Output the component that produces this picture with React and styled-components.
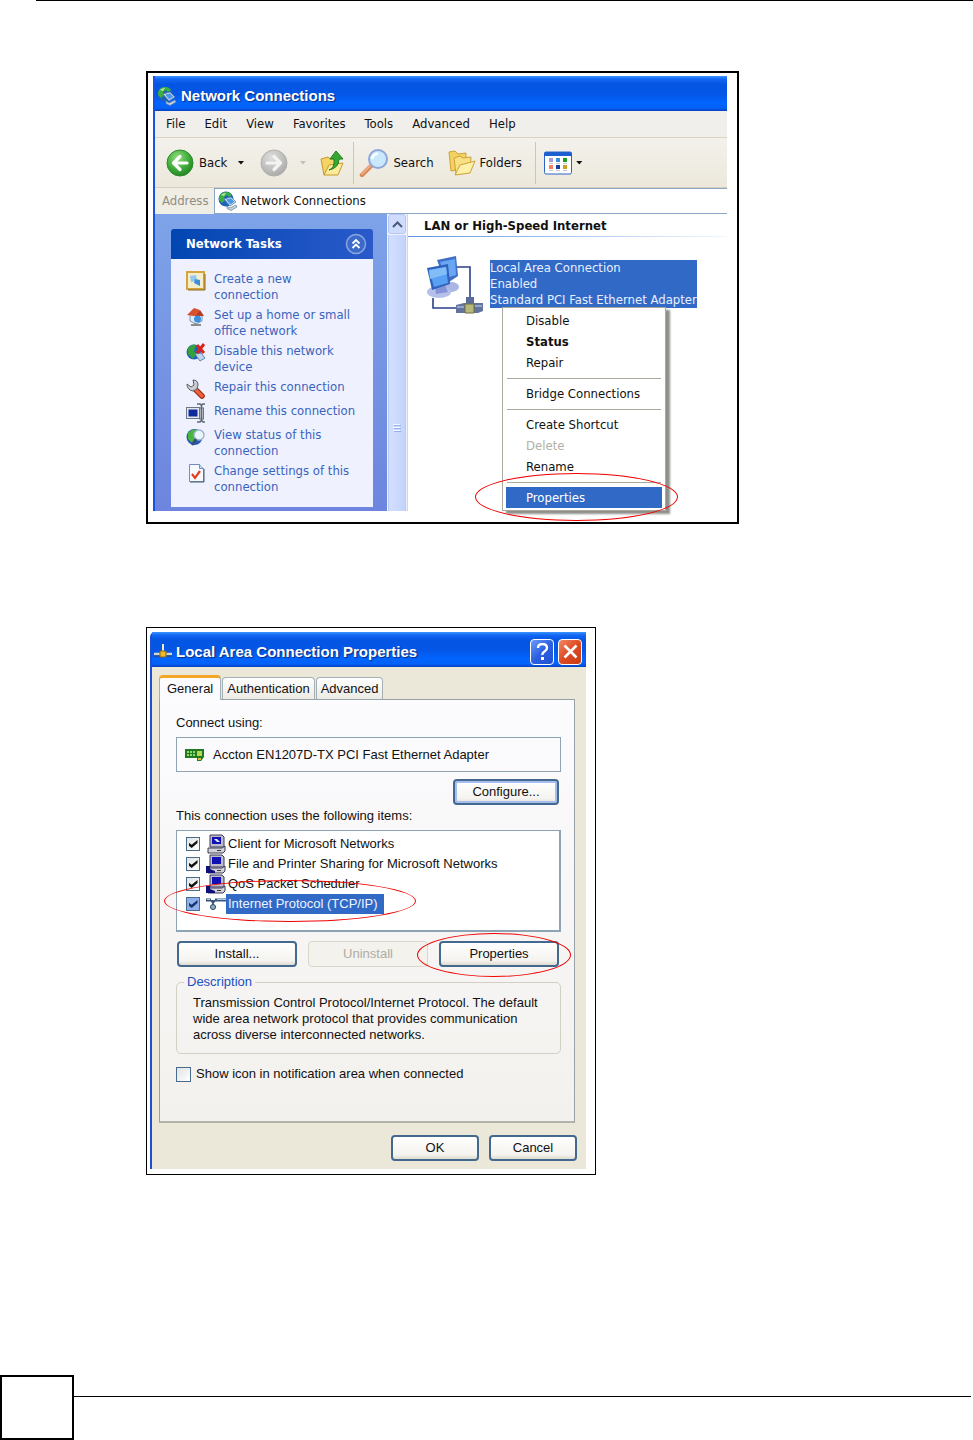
import React, { useState } from "react";
import styled, { createGlobalStyle } from "styled-components";

const GlobalStyle = createGlobalStyle`
  * { box-sizing: border-box; }
  body { margin: 0; background: #fff; }
  button, input { font: inherit; color: inherit; }
  button { margin: 0; padding: 0; border: 0; background: none; white-space: nowrap; }
`;

const tahoma = `"DejaVu Sans Condensed", "Noto Sans", sans-serif`;
const msSans = `"Liberation Sans", Arial, sans-serif`;

/* ---------- page ---------- */

const Page = styled.div`
  display: flex;
  flex-direction: column;
  min-height: 100vh;
  color: #111;
`;

const TopRule = styled.div`
  height: 1px;
  margin-left: 36px;
  background: #000;
`;

const Figures = styled.main`
  display: flex;
  flex-direction: column;
  gap: 103px;
  padding: 70px 20px 40px 146px;
`;

const Figure = styled.figure`
  width: 100%;
  max-width: ${(props) => props.$max}px;
  margin: 0;
  padding: ${(props) => props.$pad};
  border: ${(props) => props.$line}px solid #000;
`;

const Footer = styled.footer`
  display: flex;
  margin-top: auto;
  padding-right: 2px;
`;

const PageNumber = styled.div`
  width: 74px;
  height: 65px;
  border: 2px solid #000;
`;

const FooterRule = styled.div`
  flex: 1;
  height: 22px;
  border-bottom: 1px solid #000;
`;

const Ring = styled.div`
  position: absolute;
  left: ${(props) => props.$left}px;
  right: ${(props) => props.$right}px;
  top: ${(props) => props.$top}px;
  height: ${(props) => props.$height}px;
  border: 1px solid #f00000;
  border-radius: 50%;
  pointer-events: none;
`;

/* ---------- explorer window ---------- */

const Explorer = styled.section`
  font: 13px/16px ${tahoma};
  border-left: 2px solid #1553e0;
  background: #fff;
`;

const TitleBar = styled.header`
  display: flex;
  align-items: center;
  gap: 4px;
  height: 35px;
  padding: 4px 4px 0 2px;
  color: #fff;
  background: linear-gradient(#3d95ff 0, #1268f4 3px, #0455e2 8px, #0456e6 18px, #0265ff 27px, #0261f8 32px, #0642bd 35px);
`;

const Title = styled.h2`
  flex: 1;
  margin: 0;
  font: bold 15px/20px ${msSans};
  text-shadow: 1px 1px 1px #0a2c80;
`;

const MenuBar = styled.nav`
  display: flex;
  gap: 19px;
  height: 27px;
  padding-left: 11px;
  background: #f1efec;
  border-bottom: 1px solid #dbd3bf;
`;

const Toolbar = styled.div`
  display: flex;
  align-items: center;
  height: 50px;
  padding-left: 11px;
  background: linear-gradient(#f3f1ec, #ece8db);
  border-bottom: 1px solid #d5cfc0;
`;

const ToolButton = styled.button`
  display: flex;
  align-items: center;
  gap: ${(props) => props.$gap || 4}px;
  margin-right: ${(props) => props.$after || 0}px;
  svg { flex: none; }
`;

const ToolLine = styled.div`
  width: 1px;
  height: 42px;
  margin: 0 ${(props) => props.$after}px 0 0;
  background: #cbc7b8;
`;

const Caret = styled.span`
  width: 7px;
  height: 4px;
  margin-left: ${(props) => props.$before || 0}px;
  background: ${(props) => props.$color || "#111"};
  clip-path: polygon(0 0, 100% 0, 50% 100%);
`;

const AddressBar = styled.div`
  display: flex;
  height: 26px;
  padding-left: 7px;
  background: #efede4;
`;

const AddressLabel = styled.label`
  width: 52px;
  line-height: 26px;
  color: #8f8d86;
`;

const AddressField = styled.div`
  display: flex;
  flex: 1;
  align-items: center;
  gap: 3px;
  padding-left: 3px;
  border: 1px solid #8ba6c6;
  border-right: 0;
  background: #fff;
  svg { flex: none; }
`;

const AddressInput = styled.input`
  flex: 1;
  min-width: 0;
  padding: 0;
  border: 0;
  background: none;
`;

const Content = styled.div`
  display: flex;
  height: 297px;
`;

const Sidebar = styled.aside`
  flex: none;
  width: 232px;
  padding: 15px 14px 4px 16px;
  background: linear-gradient(#7ea3e8, #6d85de);
`;

const TaskHeader = styled.div`
  display: flex;
  align-items: center;
  justify-content: space-between;
  height: 30px;
  padding: 0 6px 0 15px;
  border-radius: 3px 3px 0 0;
  color: #fff;
  background: linear-gradient(90deg, #0246b2, #2a5aca);
  button { height: 22px; }
`;

const TaskTitle = styled.h3`
  margin: 0;
  font: bold 13px/16px ${tahoma};
`;

const TaskList = styled.ul`
  display: flex;
  flex-direction: column;
  gap: 4px;
  height: 248px;
  margin: 0;
  padding: 12px 15px;
  list-style: none;
  background: #eff2fe;
`;

const Task = styled.a`
  display: flex;
  gap: 8px;
  min-height: 20px;
  color: #3a62bd;
  text-decoration: none;
  white-space: nowrap;
  svg { flex: none; }
`;

const ScrollBar = styled.div`
  display: flex;
  flex-direction: column;
  flex: none;
  width: 21px;
  border-right: 1px solid #c9d8f3;
  background: #eef2fd;
`;

const ScrollArrow = styled.button`
  display: grid;
  place-items: center;
  height: 20px;
  margin: 0 1px 1px;
  border: 1px solid #b5c7f0;
  border-radius: 3px;
  background: #cfdcfc;
`;

const ScrollThumb = styled.div`
  display: grid;
  flex: 1;
  place-items: center;
  margin: 0 1px;
  padding-top: 110px;
  border-left: 1px solid #b9caf2;
  border-right: 1px solid #b9caf2;
  background: linear-gradient(90deg, #d3dffd, #c3d3fb);
`;

const Connections = styled.div`
  flex: 1;
  min-width: 0;
`;

const GroupTitle = styled.h3`
  height: 23px;
  margin: 0;
  padding: 4px 0 0 16px;
  font: bold 13px/16px ${tahoma};
  border-bottom: 1px solid;
  border-image: linear-gradient(90deg, #5b93e6, #f4f8fe) 1;
`;

const Connection = styled.div`
  display: flex;
  gap: 6px;
  padding: 19px 0 0 18px;
  svg { flex: none; }
`;

const ConnectionAnchor = styled.div`
  position: relative;
  height: 48px;
  margin-top: 4px;
`;

const ConnectionText = styled.div`
  color: #e8f0ff;
  background: #3169c6;
  white-space: nowrap;
`;

const ContextMenu = styled.div`
  position: absolute;
  top: 47px;
  left: 12px;
  width: 164px;
  padding: 2px 3px;
  border: 1px solid #aba89c;
  background: #fff;
  box-shadow: 4px 3px 2px #8e8e8a;
`;

const MenuItem = styled.button`
  display: block;
  width: 100%;
  height: 21px;
  padding-left: 20px;
  text-align: left;
  font-weight: ${(props) => (props.$bold ? "bold" : "normal")};
  color: ${(props) => (props.$active ? "#fff" : "#111")};
  background: ${(props) => (props.$active ? "#3169c6" : "transparent")};
  &:disabled { color: #b3b0a4; }
`;

const MenuLine = styled.hr`
  height: 1px;
  margin: 5px 1px 4px;
  border: 0;
  background: #aba89c;
`;

/* ---------- properties dialog ---------- */

const Dialog = styled.section`
  font: 13px/16px ${msSans};
  border-left: 2px solid #1c50cf;
  border-radius: 5px 0 0 0;
  background: #ece8d9;
`;

const CaptionButton = styled.button`
  display: grid;
  place-items: center;
  width: 24px;
  height: 26px;
  border: 1px solid #fff;
  border-radius: 4px;
  background: ${(props) => (props.$close ? "linear-gradient(135deg, #f08a68, #dd4a22 50%, #c93a14)" : "linear-gradient(135deg, #6f9cf5, #2b60e2 50%, #2050d0)")};
`;

const DialogBody = styled.div`
  padding: 8px 9px 8px 7px;
`;

const Tabs = styled.div`
  display: flex;
  align-items: flex-end;
  gap: 1px;
`;

const Tab = styled.button`
  height: ${(props) => (props.$active ? 25 : 22)}px;
  margin-bottom: ${(props) => (props.$active ? -1 : 0)}px;
  padding: 0 ${(props) => (props.$active ? 7 : 4)}px;
  border: 1px solid #a4b0b6;
  border-top: ${(props) => (props.$active ? "3px solid #f4a62a" : "1px solid #a4b0b6")};
  border-bottom: 0;
  border-radius: 4px 4px 0 0;
  background: ${(props) => (props.$active ? "#fcfbfe" : "linear-gradient(#fefefe, #ecebe4)")};
`;

const TabPanel = styled.div`
  margin-right: 2px;
  padding: 15px 13px 39px 16px;
  border: 1px solid #98a2a6;
  border-bottom: 2px solid #b4b3a9;
  background: linear-gradient(#fcfbfe, #f3f1ed);
`;

const AdapterBox = styled.div`
  display: flex;
  align-items: center;
  gap: 8px;
  height: 35px;
  margin: 6px 0 7px;
  padding-left: 8px;
  border: 1px solid #8ea4b4;
`;

const Row = styled.div`
  display: flex;
  justify-content: ${(props) => props.$justify || "space-between"};
  gap: 10px;
  padding: ${(props) => props.$pad || "0 2px 0 1px"};
`;

const Button = styled.button`
  width: ${(props) => props.$width}px;
  height: 26px;
  border: 2px solid ${(props) => (props.disabled ? "#d9d6ca" : "#44698f")};
  border-radius: 4px;
  background: linear-gradient(#fff, #f4f3ef 80%, #dedbd0);
  box-shadow: ${(props) => (props.$focus ? "inset 0 0 0 2px #a6bdf0" : "none")};
  &:disabled { color: #aeaca2; background: #f4f2ed; border-width: 1px; }
`;

const ItemsLabel = styled.div`
  margin: 3px 0 6px;
`;

const ItemList = styled.ul`
  position: relative;
  height: 102px;
  margin: 0 0 9px;
  padding: 3px 9px;
  border: 1px solid #8ea4b4;
  border-right-width: 2px;
  border-bottom-width: 2px;
  background: #fff;
  list-style: none;
`;

const Item = styled.li`
  display: flex;
  align-items: center;
  height: 20px;
  svg { flex: none; margin-left: 6px; }
`;

const ItemLabel = styled.label`
  padding: 2px 6px 2px 2px;
  white-space: nowrap;
  color: ${(props) => (props.$active ? "#eef4ff" : "inherit")};
  background: ${(props) => (props.$active ? "#3169c6" : "transparent")};
`;

const Check = styled.input.attrs({ type: "checkbox" })`
  flex: none;
  appearance: none;
  display: grid;
  place-items: center;
  width: ${(props) => props.$size}px;
  height: ${(props) => props.$size}px;
  margin: 0;
  border: 1px solid #4a6c8c;
  background: ${(props) => (props.$active ? "#8fb0ea" : "linear-gradient(135deg, #dfe3e2, #fff)")};
  &:checked::after {
    content: "";
    width: 9px;
    height: 8px;
    background: ${(props) => (props.$active ? "#17336e" : "#111")};
    clip-path: polygon(0 30%, 35% 60%, 100% 0, 100% 38%, 35% 100%, 0 68%);
  }
`;

const Description = styled.fieldset`
  margin: 7px 0 12px;
  padding: 5px 15px 10px 16px;
  border: 1px solid #d2d0c4;
  border-radius: 5px;
  legend {
    margin-left: -9px;
    padding: 0 3px;
    color: #2050c0;
  }
  p { margin: 0; }
`;

const NotifyRow = styled.div`
  display: flex;
  align-items: center;
  gap: 5px;
`;

const RingRow = styled.div`
  position: relative;
`;

/* ---------- icons ---------- */

const NetIcon = ({ size = 20 }) => (
  <svg width={size} height={size} viewBox="0 0 20 20">
    <circle cx="8" cy="8" r="7.500" fill="#1f63b8" />
    <path d="M1 6Q3 1 8 1q4 0 6 3L11 6 9 4 6 6l1 3-3 3-3-3z" fill="#3cae42" />
    <path d="M3 4q2-2 5-2L6 5z" fill="#b6e8a4" />
    <path d="M6 8l7-2 5 5-6 4z" fill="#d9e9f8" stroke="#5078a8" strokeWidth="0.8" />
    <path d="M8 8.500l5-1.300 3.500 3.600-4.300 2.600z" fill="#4a98e6" />
    <path d="M9 15l3 2 6-3 1 2-6 3.500-4-2z" fill="#c9d3e0" stroke="#6d7f94" strokeWidth="0.7" />
  </svg>
);

const CircleArrow = ({ back }) => (
  <svg width="28" height="28" viewBox="0 0 28 28">
    <defs>
      <radialGradient id={back ? "gback" : "gfwd"} cx="0.4" cy="0.3" r="0.8">
        <stop offset="0" stopColor={back ? "#8ee07a" : "#dededc"} />
        <stop offset="0.6" stopColor={back ? "#3aa636" : "#bdbdbb"} />
        <stop offset="1" stopColor={back ? "#1c7a1e" : "#a3a3a1"} />
      </radialGradient>
    </defs>
    <circle cx="14" cy="14" r="13" fill={`url(#${back ? "gback" : "gfwd"})`} stroke={back ? "#2c8a2b" : "#b0b0ae"} />
    <path
      d={back ? "M14 7.500L7.500 14l6.500 6.500M8 14h13" : "M14 7.500l6.500 6.500-6.500 6.500M20 14H7"}
      fill="none" stroke={back ? "#fff" : "#f3f3f1"} strokeWidth="3.200" strokeLinecap="round" strokeLinejoin="round" />
  </svg>
);

const UpFolder = () => (
  <svg width="24" height="26" viewBox="0 0 24 26">
    <path d="M1 9l7-2 2 2 7-1v13L4 25z" fill="#f3d465" stroke="#c79a2c" />
    <path d="M4 25l5-10 14-2-5 12z" fill="#fbeb9a" stroke="#c79a2c" />
    <path d="M9 20q6-2 5-11h-4l6-8 7 8h-4q0 9-10 11z" fill="#35a832" stroke="#1f7a20" />
  </svg>
);

const SearchIcon = () => (
  <svg width="30" height="28" viewBox="0 0 30 28">
    <path d="M12 17L3 26" stroke="#d98a58" strokeWidth="4.500" strokeLinecap="round" />
    <path d="M12 16l-9 9" stroke="#f2b48a" strokeWidth="1.500" strokeLinecap="round" />
    <circle cx="19" cy="10" r="9" fill="#c9e8fb" stroke="#8fa6d8" strokeWidth="2" />
    <path d="M13 10q1-5 6-5.500" stroke="#fff" strokeWidth="2.500" fill="none" />
  </svg>
);

const FoldersIcon = () => (
  <svg width="28" height="26" viewBox="0 0 28 26">
    <path d="M1 2l6-1 3 3 8-1v15L3 21z" fill="#f3d262" stroke="#cfa132" />
    <path d="M6 8l6-2 3 2 8-1-1 13L8 24z" fill="#f8e084" stroke="#cfa132" />
    <path d="M7 25l5-10 15-4-5 12z" fill="#fdf0a8" stroke="#cfa132" />
  </svg>
);

const ViewsIcon = () => (
  <svg width="28" height="24" viewBox="0 0 28 24">
    <rect x="0.500" y="1" width="27" height="22" rx="1.500" fill="#fff" stroke="#2d64c8" />
    <path d="M0 3q0-2 2-2h24q2 0 2 2v2H0z" fill="#1d5fd0" />
    {[["#a99bd6", "#f08060"], ["#3c8fe0", "#163f9c"], ["#17a020", "#d0a020"]].map(([a, b], i) => (
      <g key={a}>
        <rect x={5 + i * 7} y="7" width="4" height="4" fill={a} />
        <rect x={5 + i * 7} y="14" width="4" height="4" fill={b} />
        <path d={`M${5 + i * 7} 12.500h4M${5 + i * 7} 19.500h4`} stroke="#c9c9c9" />
      </g>
    ))}
  </svg>
);

const CollapseIcon = () => (
  <svg width="22" height="22" viewBox="0 0 22 22">
    <circle cx="11" cy="11" r="9.500" fill="#3c6acb" stroke="#8aa6e0" strokeWidth="1.500" />
    <path d="M7.500 10.500L11 7l3.500 3.500M7.500 15l3.500-3.500 3.500 3.500" fill="none" stroke="#fff" strokeWidth="1.800" />
  </svg>
);

const taskIcons = {
  create: (
    <>
      <rect x="1" y="1" width="17" height="17" fill="#f6edcb" stroke="#d3a53c" strokeWidth="2" />
      <path d="M4 5l6-1 1 6-6 1z" fill="#8fc8f0" />
      <path d="M9 8l5 1v6l-6-3z" fill="#3d8fdd" />
      <path d="M2 19h17V3" stroke="#8b6b22" fill="none" />
    </>
  ),
  home: (
    <>
      <path d="M4 8v6l6 3 6-3V8l-5-5z" fill="#dcecf9" stroke="#7f95b4" />
      <path d="M1 8l7-7 6 2-6 6z" fill="#d9512c" />
      <path d="M8 9l6-6 4 6z" fill="#b93c1e" />
      <circle cx="11.500" cy="12" r="3.500" fill="#3f8fdb" />
      <path d="M5 18h10M9 16v3" stroke="#8c8c8c" strokeWidth="2" />
    </>
  ),
  disable: (
    <>
      <circle cx="8" cy="9" r="7.500" fill="#2560c0" />
      <path d="M2 5q4-5 8-3L8 8l2 3-3 5-5-5z" fill="#33a23a" />
      <path d="M9 11l6-1 4 5-5 3z" fill="#bed6ee" stroke="#6484a8" />
      <path d="M11 2l7 8M18 1l-7 9" stroke="#d8261c" strokeWidth="3" />
    </>
  ),
  repair: (
    <>
      <path d="M9 10l7 7" stroke="#8f2413" strokeWidth="5.500" strokeLinecap="round" />
      <path d="M9 10l7 7" stroke="#f0603a" strokeWidth="3.500" strokeLinecap="round" />
      <path d="M1 5l4 3 3-2-1-5q5 0 5 5l-1 4-4 2Q1 11 1 5z" fill="#c9cdd2" stroke="#5a5f66" />
    </>
  ),
  rename: (
    <>
      <rect x="0.500" y="4.500" width="13" height="11" fill="#e4e8ee" stroke="#6b7686" />
      <rect x="2.500" y="6.500" width="9" height="7" fill="#0d2b9a" />
      <rect x="13.500" y="5" width="4" height="11" fill="#cdd5de" stroke="#6b7686" />
      <path d="M11 1h3l1.500 1L17 1h2M15.500 2v15M11 19h3l1.500-1.500L17 19h2" stroke="#5e6874" strokeWidth="1.600" fill="none" />
    </>
  ),
  view: (
    <>
      <circle cx="8.500" cy="10" r="8" fill="#2558b4" />
      <path d="M2 6q4-5 10-3L9 8l1 5-4 3-4-4z" fill="#47b53e" />
      <circle cx="13" cy="8" r="5" fill="#eaf4fb" stroke="#9fb4c8" strokeWidth="1.500" />
      <path d="M10 12l-4 6" stroke="#3b4a78" strokeWidth="2.500" />
    </>
  ),
  settings: (
    <>
      <path d="M3.500 1.500h10l4 4v13h-14z" fill="#f6faff" stroke="#6d8fc0" />
      <path d="M13.500 1.500v4h4" fill="#c7daf2" stroke="#6d8fc0" />
      <path d="M18 6v13H4" stroke="#505c70" fill="none" />
      <path d="M6 11l3 4 5-7" stroke="#e2401f" strokeWidth="2.200" fill="none" />
    </>
  ),
};

const LanIcon = () => (
  <svg width="58" height="58" viewBox="0 0 58 58">
    <path d="M30 11h14v32M7 42v10h24" fill="none" stroke="#2b3f8a" strokeWidth="1.600" />
    <ellipse cx="25" cy="31" rx="8" ry="5" fill="#a9b5e4" />
    <path d="M11 4l19-4 2 20-12 8z" fill="#3f6fc8" />
    <path d="M14 6l15-3 1 16-10 3z" fill="#6aa7f2" />
    <ellipse cx="13" cy="36" rx="12" ry="6" fill="#b4bfea" />
    <path d="M9 30l10-1 3 7-12 2z" fill="#8494d6" />
    <path d="M1 12l21-4 2 20-18 6z" fill="#2f62bd" />
    <path d="M3 14l17-3 2 16-14 4z" fill="#58a0f3" />
    <path d="M3 14l17-3 1 7-17 5z" fill="#83bdf8" />
    <path d="M40 41h8v8h-8z" fill="#5a6c9c" />
    <path d="M30 49l8-2h19v8l-5 2H30z" fill="#62749e" />
    <path d="M39 48h9v9h-9z" fill="#b8b878" stroke="#6f7040" />
    <path d="M31 51h7M49 50h7" stroke="#a9b8d8" strokeWidth="1.500" />
  </svg>
);

const PlugIcon = () => (
  <svg width="18" height="18" viewBox="0 0 18 18">
    <path d="M8 1h2v8H8z" fill="#f4eac0" />
    <path d="M0 11h6M12 11h6" stroke="#d8d8c8" strokeWidth="2.500" />
    <path d="M6 8h6v6H6z" fill="#f0b92c" stroke="#8a6412" />
    <path d="M0 13h5M13 13h5" stroke="#3a3a4a" />
  </svg>
);

const CardIcon = () => (
  <svg width="20" height="14" viewBox="0 0 20 14">
    <path d="M0 1h19v8l-3 4h-4v-3H0z" fill="#1f7a22" />
    <path d="M2 3h2v2H2zM5 3h2v2H5zM8 3h2v2H8zM2 6h2v2H2zM5 6h2v2H5zM8 6h2v2H8z" fill="#8fdc6a" />
    <path d="M12 3h5v5h-5z" fill="#b6d84c" />
    <path d="M13 10h3v2h-3z" fill="#d8c23a" />
  </svg>
);

const PcIcon = ({ hand }) => (
  <svg width="20" height="20" viewBox="0 0 20 20">
    <path d="M4 1h12l2 2v10H4z" fill="#bdbccb" stroke="#3a3a58" />
    <rect x="6" y="3" width="9" height="7" fill="#1010b4" />
    {!hand && <path d="M8 5h3l3 3h-3z" fill="#dfe8ff" />}
    <path d="M2 14h14l3-2v5l-2 2H2z" fill="#d4d3da" stroke="#3a3a58" />
    <path d="M11 16.500h4" stroke="#333" />
    {hand && <path d="M0 12h4v3l5 2v2H0z" fill="#10107c" />}
  </svg>
);

const ProtocolIcon = () => (
  <svg width="20" height="20" viewBox="0 0 20 20">
    <path d="M0 6h5M9 6h11" stroke="#38567c" strokeWidth="3" />
    <path d="M1 5.500h3M11 5.500h9" stroke="#a9c6e6" />
    <path d="M4 6l3 5 3-5z" fill="#38567c" />
    <circle cx="7" cy="13" r="2.500" fill="#8fb0cf" stroke="#24405f" />
  </svg>
);

/* ---------- data ---------- */

const menus = ["File", "Edit", "View", "Favorites", "Tools", "Advanced", "Help"];

const tasks = [
  ["create", "Create a new", "connection"],
  ["home", "Set up a home or small", "office network"],
  ["disable", "Disable this network", "device"],
  ["repair", "Repair this connection"],
  ["rename", "Rename this connection"],
  ["view", "View status of this", "connection"],
  ["settings", "Change settings of this", "connection"],
];

const contextItems = [
  { name: "Disable" },
  { name: "Status", bold: true },
  { name: "Repair" },
  null,
  { name: "Bridge Connections" },
  null,
  { name: "Create Shortcut" },
  { name: "Delete", disabled: true },
  { name: "Rename" },
  null,
  { name: "Properties", active: true },
];

const items = [
  { id: "client", name: "Client for Microsoft Networks", icon: <PcIcon /> },
  { id: "sharing", name: "File and Printer Sharing for Microsoft Networks", icon: <PcIcon hand /> },
  { id: "qos", name: "QoS Packet Scheduler", icon: <PcIcon hand /> },
  { id: "tcpip", name: "Internet Protocol (TCP/IP)", icon: <ProtocolIcon />, active: true },
];

const NetworkConnections = () => {
  const [address, setAddress] = useState("Network Connections");

  return (
    <Explorer>
      <TitleBar>
        <NetIcon />
        <Title>Network Connections</Title>
      </TitleBar>
      <MenuBar>
        {menus.map((name) => (
          <button key={name}>{name}</button>
        ))}
      </MenuBar>
      <Toolbar>
        <ToolButton $gap={5} $after={16}>
          <CircleArrow back />
          Back
          <Caret $before={5} />
        </ToolButton>
        <ToolButton $gap={11} $after={14} aria-label="Forward">
          <CircleArrow />
          <Caret $color="#c4c1b6" />
        </ToolButton>
        <ToolButton $after={9} aria-label="Up">
          <UpFolder />
        </ToolButton>
        <ToolLine $after={5} />
        <ToolButton $after={14}>
          <SearchIcon />
          Search
        </ToolButton>
        <ToolButton $after={13}>
          <FoldersIcon />
          Folders
        </ToolButton>
        <ToolLine $after={8} />
        <ToolButton aria-label="Views">
          <ViewsIcon />
          <Caret />
        </ToolButton>
      </Toolbar>
      <AddressBar>
        <AddressLabel htmlFor="address">Address</AddressLabel>
        <AddressField>
          <NetIcon />
          <AddressInput id="address" value={address} onChange={(e) => setAddress(e.target.value)} />
        </AddressField>
      </AddressBar>
      <Content>
        <Sidebar>
          <TaskHeader>
            <TaskTitle>Network Tasks</TaskTitle>
            <button aria-label="Collapse"><CollapseIcon /></button>
          </TaskHeader>
          <TaskList>
            {tasks.map(([icon, first, second]) => (
              <li key={icon}>
                <Task href="#">
                  <svg width="20" height="20" viewBox="0 0 20 20">{taskIcons[icon]}</svg>
                  <span>{first}{second && <><br />{second}</>}</span>
                </Task>
              </li>
            ))}
          </TaskList>
        </Sidebar>
        <ScrollBar>
          <ScrollArrow aria-label="Scroll up">
            <svg width="11" height="7" viewBox="0 0 11 7">
              <path d="M1 6l4.500-4.500L10 6" fill="none" stroke="#46597f" strokeWidth="2" />
            </svg>
          </ScrollArrow>
          <ScrollThumb>
            <svg width="8" height="9" viewBox="0 0 8 9">
              <path d="M0 .5h7M0 3.500h7M0 6.500h7" stroke="#f2f6ff" />
              <path d="M1 1.500h7M1 4.500h7M1 7.500h7" stroke="#98b0e8" />
            </svg>
          </ScrollThumb>
        </ScrollBar>
        <Connections>
          <GroupTitle>LAN or High-Speed Internet</GroupTitle>
          <Connection>
            <LanIcon />
            <ConnectionAnchor>
              <ConnectionText>
                Local Area Connection<br />Enabled<br />Standard PCI Fast Ethernet Adapter
              </ConnectionText>
              <ContextMenu>
                {contextItems.map((item, i) =>
                  item ? (
                    <MenuItem key={i} $bold={item.bold} $active={item.active} disabled={item.disabled}>
                      {item.name}
                    </MenuItem>
                  ) : (
                    <MenuLine key={i} />
                  )
                )}
                <Ring $left={-28} $right={-13} $top={165} $height={48} />
              </ContextMenu>
            </ConnectionAnchor>
          </Connection>
        </Connections>
      </Content>
    </Explorer>
  );
};

const ConnectionProperties = () => {
  const [checked, setChecked] = useState({ client: true, sharing: true, qos: true, tcpip: true });
  const [notify, setNotify] = useState(false);

  return (
    <Dialog>
      <TitleBar>
        <PlugIcon />
        <Title>Local Area Connection Properties</Title>
        <CaptionButton aria-label="Help">
          <svg width="15" height="17" viewBox="0 0 15 17">
            <path d="M3 5q0-4 4.500-4T12 5q0 2-2.500 3.500T7.500 12" fill="none" stroke="#fff" strokeWidth="2.400" />
            <path d="M6 14h3v3H6z" fill="#fff" />
          </svg>
        </CaptionButton>
        <CaptionButton $close aria-label="Close">
          <svg width="15" height="15" viewBox="0 0 15 15">
            <path d="M1.500 1.500l12 12M13.500 1.500l-12 12" stroke="#fff" strokeWidth="2.600" />
          </svg>
        </CaptionButton>
      </TitleBar>
      <DialogBody>
        <Tabs>
          <Tab $active>General</Tab>
          <Tab>Authentication</Tab>
          <Tab>Advanced</Tab>
        </Tabs>
        <TabPanel>
          <div>Connect using:</div>
          <AdapterBox>
            <CardIcon />
            Accton EN1207D-TX PCI Fast Ethernet Adapter
          </AdapterBox>
          <Row $justify="flex-end">
            <Button $width={106} $focus>Configure...</Button>
          </Row>
          <ItemsLabel>This connection uses the following items:</ItemsLabel>
          <ItemList>
            {items.map((item) => (
              <Item key={item.id}>
                <Check
                  id={item.id}
                  $size={14}
                  $active={item.active}
                  checked={checked[item.id]}
                  onChange={() => setChecked({ ...checked, [item.id]: !checked[item.id] })}
                />
                {item.icon}
                <ItemLabel htmlFor={item.id} $active={item.active}>{item.name}</ItemLabel>
              </Item>
            ))}
            <Ring $left={-13} $right={143} $top={49} $height={42} />
          </ItemList>
          <RingRow>
            <Row>
              <Button $width={120}>Install...</Button>
              <Button $width={120} disabled>Uninstall</Button>
              <Button $width={120}>Properties</Button>
            </Row>
            <Ring $left={241} $right={-10} $top={-8} $height={44} />
          </RingRow>
          <Description>
            <legend>Description</legend>
            <p>
              Transmission Control Protocol/Internet Protocol. The default<br />
              wide area network protocol that provides communication<br />
              across diverse interconnected networks.
            </p>
          </Description>
          <NotifyRow>
            <Check id="notify" $size={15} checked={notify} onChange={() => setNotify(!notify)} />
            <label htmlFor="notify">Show icon in notification area when connected</label>
          </NotifyRow>
        </TabPanel>
        <Row $justify="flex-end" $pad="12px 0 0">
          <Button $width={88}>OK</Button>
          <Button $width={88}>Cancel</Button>
        </Row>
      </DialogBody>
    </Dialog>
  );
};

const App = () => (
  <>
    <GlobalStyle />
    <Page>
      <TopRule />
      <Figures>
        <Figure $max={593} $line={2} $pad="3px 10px 11px 5px">
          <NetworkConnections />
        </Figure>
        <Figure $max={450} $line={1} $pad="4px 9px 5px 3px">
          <ConnectionProperties />
        </Figure>
      </Figures>
      <Footer>
        <PageNumber />
        <FooterRule />
      </Footer>
    </Page>
  </>
);

export default App;
